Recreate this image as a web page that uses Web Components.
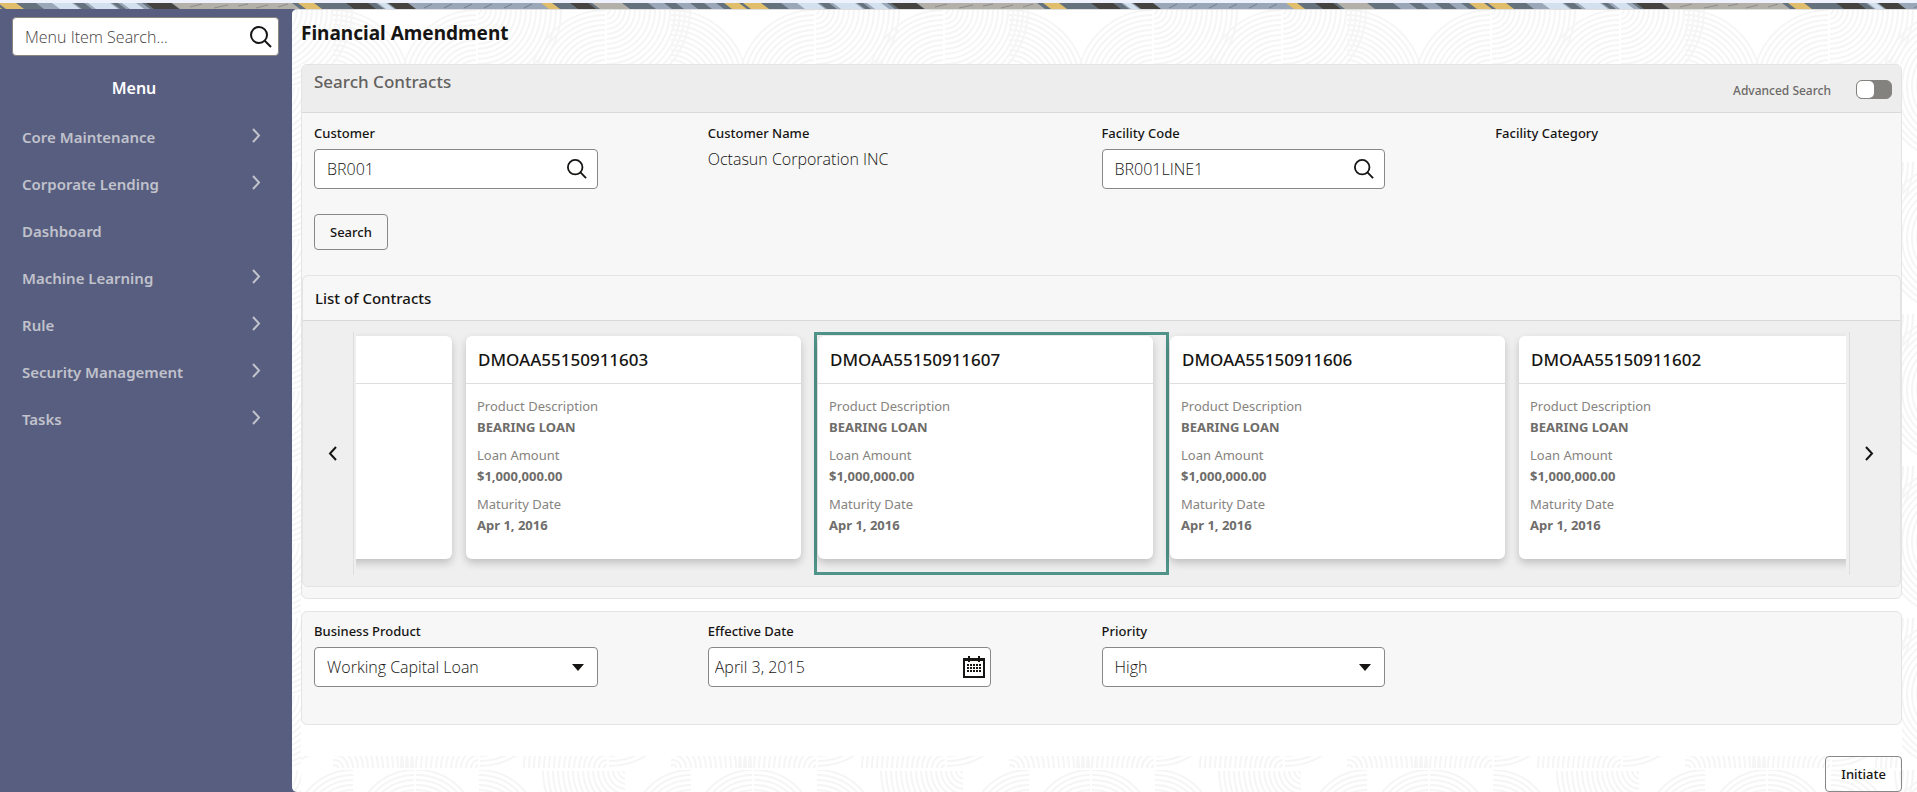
<!DOCTYPE html>
<html lang="en">
<head>
<meta charset="utf-8">
<title>Financial Amendment</title>
<style>
    body {
        --light-font: "Open Sans", "Noto Sans", sans-serif;
        margin: 0;
        font-family: "Noto Sans", "Open Sans", sans-serif;
        font-size: 16px;
        line-height: 24px;
        color: #161513;
        background-color: #ffffff;
    }
</style>
</head>
<body>
<app-shell>
    <side-menu slot="menu">
        <menu-entry expandable>Core Maintenance</menu-entry>
        <menu-entry expandable>Corporate Lending</menu-entry>
        <menu-entry>Dashboard</menu-entry>
        <menu-entry expandable>Machine Learning</menu-entry>
        <menu-entry expandable>Rule</menu-entry>
        <menu-entry expandable>Security Management</menu-entry>
        <menu-entry expandable>Tasks</menu-entry>
    </side-menu>
    <span slot="title">Financial Amendment</span>

    <search-panel>
        <span slot="heading">Search Contracts</span>
        <form-row>
            <form-field kind="search" label="Customer" value="BR001"></form-field>
            <form-field kind="output" label="Customer Name" value="Octasun Corporation INC"></form-field>
            <form-field kind="search" label="Facility Code" value="BR001LINE1"></form-field>
            <form-field kind="output" label="Facility Category" value=""></form-field>
        </form-row>
        <action-button>Search</action-button>
        <contract-carousel slot="results">
            <span slot="heading">List of Contracts</span>
            <contract-card></contract-card>
            <contract-card number="DMOAA55150911603" product="BEARING LOAN" amount="$1,000,000.00" maturity="Apr 1, 2016"></contract-card>
            <contract-card selected number="DMOAA55150911607" product="BEARING LOAN" amount="$1,000,000.00" maturity="Apr 1, 2016"></contract-card>
            <contract-card number="DMOAA55150911606" product="BEARING LOAN" amount="$1,000,000.00" maturity="Apr 1, 2016"></contract-card>
            <contract-card number="DMOAA55150911602" product="BEARING LOAN" amount="$1,000,000.00" maturity="Apr 1, 2016"></contract-card>
        </contract-carousel>
    </search-panel>

    <amendment-panel>
        <form-row>
            <form-field kind="select" label="Business Product" value="Working Capital Loan"></form-field>
            <form-field kind="date" label="Effective Date" value="April 3, 2015"></form-field>
            <form-field kind="select" label="Priority" value="High"></form-field>
        </form-row>
    </amendment-panel>

    <action-button slot="actions">Initiate</action-button>
</app-shell>

<script>
const ICONS = {
    search: `<svg width="22" height="22" viewBox="0 0 22 22" fill="none" stroke="#161513" stroke-width="2">
        <circle cx="9" cy="9" r="8"/><path d="M14.5 14.5L21 21"/></svg>`,
    calendar: `<svg width="24" height="24" viewBox="0 0 24 24">
        <path fill="#161513" fill-rule="evenodd" d="M1 3h22v20H1zM3 6v15h18V6z"/>
        <path fill="#161513" d="M6 1h2v6H6zM16 1h2v6h-2z"/>
        <g stroke="#161513" stroke-width="2" stroke-dasharray="2 1">
            <path d="M5 10h14M5 13h14M5 16h14"/></g></svg>`,
    right: `<svg width="9" height="15" viewBox="0 0 9 15" fill="none" stroke="currentColor" stroke-width="2">
        <path d="M1 1L7 7.5L1 14"/></svg>`,
    left: `<svg width="9" height="15" viewBox="0 0 9 15" fill="none" stroke="currentColor" stroke-width="2">
        <path d="M8 1L2 7.5L8 14"/></svg>`
};

const svgUrl = (width, height, body) => {
    const svg = `<svg xmlns="http://www.w3.org/2000/svg" width="${width}" height="${height}">${body}</svg>`;
    return `url("data:image/svg+xml,${encodeURIComponent(svg)}")`;
};

// concentric circles around (cx, cy), cut to the box [x, y, width, height]
const rings = (cx, cy, from, to, step, box) => {
    const [x, y, w, h] = box;
    const id = `c${cx}_${cy}_${x}_${y}`;
    let out = `<clipPath id="${id}"><rect x="${x}" y="${y}" width="${w}" height="${h}"/></clipPath><g clip-path="url(#${id})">`;
    for (let r = from; r <= to; r += step) {
        out += `<circle cx="${cx}" cy="${cy}" r="${r}"/>`;
    }
    return out + '</g>';
};

const lines = (body) => `<g fill="none" stroke="#f5f5f5" stroke-width="2">${body}</g>`;

const WAVES = svgUrl(338, 152, lines(
    rings(0, 0, 4, 84, 5, [1, 0, 84, 76]) +
    rings(65, 76, 6, 76, 5, [65, 0, 76, 152]) +
    rings(209, 76, 6, 76, 5, [130, 0, 78, 152]) +
    rings(209, 0, 4, 84, 5, [210, 0, 84, 76]) +
    rings(338, 76, 6, 76, 5, [260, 0, 77, 152]) +
    rings(0, 76, 6, 76, 5, [1, 77, 64, 75])
));

const WAVES_FOOT = svgUrl(338, 60, lines(
    rings(2, 12, 3, 84, 5, [0, 0, 82, 12]) +
    rings(146, 12, 3, 84, 5, [64, 0, 81, 12]) +
    rings(146, -60, 60, 72, 5, [147, 0, 44, 12]) +
    rings(274, 12, 3, 84, 5, [190, 0, 84, 12]) +
    rings(276, -60, 60, 72, 5, [276, 0, 44, 12]) +
    rings(20, 74, 35, 60, 5, [0, 14, 20, 46]) +
    rings(358, 74, 35, 60, 5, [294, 14, 44, 46]) +
    rings(82, 74, 35, 60, 5, [22, 14, 59, 46]) +
    rings(84, 74, 35, 60, 5, [83, 14, 61, 46]) +
    rings(146, 74, 35, 60, 5, [146, 14, 60, 46]) +
    rings(294, 14, 4, 84, 5, [208, 15, 84, 45])
));

const band = (color, ...xs) => xs.map(([a, b]) =>
    `<path fill="${color}" d="M${a} 0H${b}l8 6H${a + 8}z"/>`).join('');

const STRIP = svgUrl(745, 6,
    '<rect width="745" height="6" fill="#65727d"/>' +
    band('#9aa7b8', [36, 142], [376, 545], [648, 664], [676, 690], [704, 716]) +
    band('#d3e0ee', [52, 72], [88, 110], [122, 136], [378, 386]) +
    band('#65727d', [74, 84], [112, 118]) +
    band('#b3b0aa', [172, 292], [592, 622]) +
    band('#45433f', [146, 171], [346, 368], [388, 408], [570, 588]) +
    band('#e0be6b', [-21, -6], [-2, 16], [298, 314], [541, 552], [724, 739], [743, 760]) +
    '<path fill="none" stroke="#8d8c8a" d="M190 4l12-3M214 5l14-3M238 3l10-2M256 5l12-3M278 4l10-3"/>' +
    '<path fill="none" stroke="#6f7d8d" d="M424 5l8-4M444 5l8-4M464 5l8-4M484 5l8-4M504 5l8-4M524 5l8-4"/>'
);

const BASE_STYLE = `
    * { box-sizing: border-box; }
    :host { display: block; box-sizing: border-box; }
    button, input, select { font: inherit; color: inherit; margin: 0; }
    svg { display: block; flex: none; }
`;

class BaseElement extends HTMLElement {
    constructor() {
        super();
        this.attachShadow({mode: 'open'});
    }

    connectedCallback() {
        const template = document.createElement('template');
        template.innerHTML = `<style>${BASE_STYLE}${this.styles()}</style>${this.markup()}`;
        this.shadowRoot.replaceChildren(template.content.cloneNode(true));
        this.ready();
    }

    styles() { return ''; }
    markup() { return '<slot></slot>'; }
    ready() {}
}

class AppShell extends BaseElement {
    styles() {
        return `
            :host { display: flex; flex-direction: column; min-height: 100vh; }
            .strip { height: 9px; border-top: 3px solid #eff1fd; background: ${STRIP} repeat-x; background-origin: padding-box; }
            .page { display: flex; flex: 1; background-color: #585e7f; }
            main {
                flex: 1;
                min-width: 0;
                display: flex;
                flex-direction: column;
                padding: 9px 15px 0 9px;
                border-top: 1px solid #dedede;
                border-radius: 5px 0 0 5px;
                background: #ffffff ${WAVES} -24px 0;
            }
            h1 { margin: 0 0 17px; font-size: 19px; line-height: 28px; font-weight: 700; }
            .content { display: flex; flex-direction: column; gap: 12px; padding-bottom: 31px; background-color: #ffffff; }
            footer {
                flex: 1;
                display: flex;
                justify-content: flex-end;
                align-items: flex-start;
                background: #ffffff ${WAVES_FOOT} 32px 0 repeat-x;
            }
        `;
    }

    markup() {
        return `
            <div class="strip"></div>
            <div class="page">
                <slot name="menu"></slot>
                <main>
                    <h1><slot name="title"></slot></h1>
                    <div class="content"><slot></slot></div>
                    <footer><slot name="actions"></slot></footer>
                </main>
            </div>
        `;
    }
}

class SideMenu extends BaseElement {
    styles() {
        return `
            :host { flex: none; width: 292px; padding-top: 8px; color: #ffffff; }
            .search {
                display: flex;
                align-items: center;
                height: 39px;
                margin: 0 13px 0 12px;
                padding-right: 6px;
                border: 1px solid #8b8580;
                border-radius: 4px;
                background-color: #ffffff;
            }
            input {
                flex: 1;
                min-width: 0;
                padding: 0 0 0 12px;
                border: 0;
                background: none;
                font-family: var(--light-font);
                font-weight: 300;
                outline: 0;
                color: #161513;
            }
            input::placeholder { color: #45423f; opacity: 1; }
            button { padding: 0; border: 0; background: none; }
            nav { margin-right: 24px; }
            h2 { margin: 20px 0 13px; font-size: 16px; line-height: 24px; font-weight: 600; text-align: center; }
        `;
    }

    markup() {
        return `
            <div class="search">
                <input type="text" placeholder="Menu Item Search..." aria-label="Menu Item Search">
                <button type="button" aria-label="Search menu">${ICONS.search}</button>
            </div>
            <nav>
                <h2>Menu</h2>
                <slot></slot>
            </nav>
        `;
    }
}

class MenuEntry extends BaseElement {
    styles() {
        return `
            a {
                display: flex;
                align-items: center;
                justify-content: space-between;
                height: 47px;
                padding: 0 7px 0 22px;
                font-size: 15px;
                font-weight: 600;
                color: #c0c2cc;
                text-decoration: none;
            }
            svg { margin-bottom: 2px; }
        `;
    }

    markup() {
        return `<a href="#"><slot></slot>${this.hasAttribute('expandable') ? ICONS.right : ''}</a>`;
    }
}

class ActionButton extends BaseElement {
    styles() {
        return `
            button {
                height: 36px;
                padding: 0 15px;
                border: 1px solid #8a8886;
                border-radius: 4px;
                background: none;
                font-size: 13px;
                font-weight: 500;
            }
        `;
    }

    markup() {
        return '<button type="button"><slot></slot></button>';
    }
}

class FormRow extends BaseElement {
    styles() {
        return ':host { display: grid; grid-template-columns: repeat(4, 1fr); }';
    }
}

class FormField extends BaseElement {
    styles() {
        return `
            label { display: block; margin-bottom: 6px; font-size: 13px; line-height: 20px; font-weight: 500; }
            output { display: block; margin-top: -2px; font-family: var(--light-font); font-weight: 300; }
            .box {
                display: flex;
                align-items: center;
                width: 72%;
                height: 40px;
                border: 1px solid #8a8886;
                border-radius: 4px;
                background-color: #ffffff;
            }
            input, select {
                flex: 1;
                min-width: 0;
                height: 100%;
                padding: 0 12px;
                border: 0;
                background: none;
                font-family: var(--light-font);
                font-weight: 300;
                outline: 0;
            }
            select {
                appearance: none;
                background: ${svgUrl(12, 7, '<path fill="#161513" d="M0 0h12L6 7z"/>')} right 13px center no-repeat;
            }
            button { padding: 0; border: 0; background: none; }
            .search button { margin-right: 10px; }
            .search svg { width: 20px; height: 20px; }
            .date input { padding: 0 6px; }
            .date button { margin-right: 4px; }
        `;
    }

    markup() {
        const kind = this.getAttribute('kind');
        const label = this.getAttribute('label');
        const value = this.getAttribute('value');
        const heading = `<label for="control">${label}</label>`;
        if (kind === 'output') {
            return `${heading}<output id="control">${value}</output>`;
        }
        if (kind === 'select') {
            return `${heading}<div class="box"><select id="control"><option>${value}</option></select></div>`;
        }
        const icon = kind === 'date' ? ICONS.calendar : ICONS.search;
        return `
            ${heading}
            <div class="box ${kind}">
                <input id="control" type="text" value="${value}">
                <button type="button" aria-label="Select ${label}">${icon}</button>
            </div>
        `;
    }
}

class ToggleSwitch extends BaseElement {
    styles() {
        return `
            label { display: flex; align-items: center; gap: 25px; font-size: 12px; line-height: 16px; font-weight: 500; color: #6b6966; }
            span { padding-top: 4px; }
            input {
                appearance: none;
                width: 36px;
                height: 19px;
                border: 1px solid #84827f;
                border-radius: 6px;
                background: #84827f;
            }
            input::before { content: ""; display: block; width: 17px; height: 17px; border-radius: 5px; background: #ffffff; }
            input:checked::before { margin-left: auto; }
        `;
    }

    markup() {
        return '<label><span><slot></slot></span><input type="checkbox" role="switch"></label>';
    }
}

class SearchPanel extends BaseElement {
    styles() {
        return `
            :host { border: 1px solid #e4e4e4; border-radius: 6px; background-color: #f7f7f7; padding-bottom: 11px; }
            header {
                display: flex;
                justify-content: space-between;
                align-items: flex-start;
                height: 48px;
                padding: 5px 9px 0 12px;
                border-bottom: 1px solid #d9d9d9;
                border-radius: 6px 6px 0 0;
                background-color: #ededed;
            }
            h2 { margin: 0; font-size: 17px; line-height: 24px; font-weight: 500; color: #63615e; }
            toggle-switch { margin-top: 9px; }
            .fields { display: flex; flex-direction: column; gap: 25px; padding: 10px 12px 25px; }
        `;
    }

    markup() {
        return `
            <header>
                <h2><slot name="heading"></slot></h2>
                <toggle-switch>Advanced Search</toggle-switch>
            </header>
            <div class="fields"><slot></slot></div>
            <slot name="results"></slot>
        `;
    }
}

class ContractCarousel extends BaseElement {
    styles() {
        return `
            :host { border: 1px solid #e4e4e4; border-radius: 6px; background-color: #efefef; }
            h3 {
                margin: 0;
                padding: 10px 12px;
                border-bottom: 1px solid #d9d9d9;
                border-radius: 6px 6px 0 0;
                background-color: #f7f7f7;
                font-size: 15px;
                line-height: 24px;
                font-weight: 500;
            }
            .body { display: flex; padding: 11px 0; }
            .body > button { flex: none; width: 50px; padding: 0 11px 0 0; border: 0; background: none; }
            .body > button svg { margin-left: 25px; }
            .body > button:last-child svg { margin-left: 15px; }
            .view {
                flex: 1;
                min-width: 0;
                padding: 0 3px 0 2px;
                border: solid #dedede;
                border-width: 0 1px;
            }
            .track { display: flex; align-items: flex-start; overflow: hidden; }
        `;
    }

    markup() {
        return `
            <h3><slot name="heading"></slot></h3>
            <div class="body">
                <button type="button" aria-label="Previous">${ICONS.left}</button>
                <div class="view"><div class="track"><slot></slot></div></div>
                <button type="button" aria-label="Next">${ICONS.right}</button>
            </div>
        `;
    }

    ready() {
        const track = this.shadowRoot.querySelector('.track');
        const [previous, next] = this.shadowRoot.querySelectorAll('button');
        previous.addEventListener('click', () => track.scrollBy({left: -349, behavior: 'smooth'}));
        next.addEventListener('click', () => track.scrollBy({left: 349, behavior: 'smooth'}));
        // cards render after the carousel itself
        customElements.whenDefined('contract-card').then(() => {
            track.scrollLeft = 240;
        });
    }
}

class ContractCard extends BaseElement {
    styles() {
        return `
            :host { flex: none; padding: 4px 13px 16px 1px; }
            :host([selected]) { padding: 1px 13px 13px 1px; border: 3px solid #4f9389; }
            article {
                width: 335px;
                height: 223px;
                border-radius: 6px;
                background-color: #ffffff;
                box-shadow: 0 4px 8px rgba(0, 0, 0, 0.2);
            }
            h4 {
                height: 48px;
                margin: 0;
                padding: 0 12px;
                border-bottom: 1px solid #dedede;
                font-size: 17px;
                line-height: 47px;
                font-weight: 500;
            }
            dl { margin: 0; padding: 12px 11px 0; font-size: 13px; line-height: 21px; color: #86837f; }
            dd { margin: 0 0 7px; font-weight: 700; color: #6f6d6a; }
        `;
    }

    markup() {
        const number = this.getAttribute('number');
        if (!number) {
            return '<article><h4></h4></article>';
        }
        return `
            <article>
                <h4>${number}</h4>
                <dl>
                    <dt>Product Description</dt><dd>${this.getAttribute('product')}</dd>
                    <dt>Loan Amount</dt><dd>${this.getAttribute('amount')}</dd>
                    <dt>Maturity Date</dt><dd>${this.getAttribute('maturity')}</dd>
                </dl>
            </article>
        `;
    }
}

class AmendmentPanel extends BaseElement {
    styles() {
        return ':host { padding: 9px 12px 37px; border: 1px solid #e4e4e4; border-radius: 6px; background-color: #f7f7f7; }';
    }
}

window.customElements.define('app-shell', AppShell);
window.customElements.define('side-menu', SideMenu);
window.customElements.define('menu-entry', MenuEntry);
window.customElements.define('action-button', ActionButton);
window.customElements.define('form-row', FormRow);
window.customElements.define('form-field', FormField);
window.customElements.define('toggle-switch', ToggleSwitch);
window.customElements.define('search-panel', SearchPanel);
window.customElements.define('contract-carousel', ContractCarousel);
window.customElements.define('contract-card', ContractCard);
window.customElements.define('amendment-panel', AmendmentPanel);
</script>
</body>
</html>
